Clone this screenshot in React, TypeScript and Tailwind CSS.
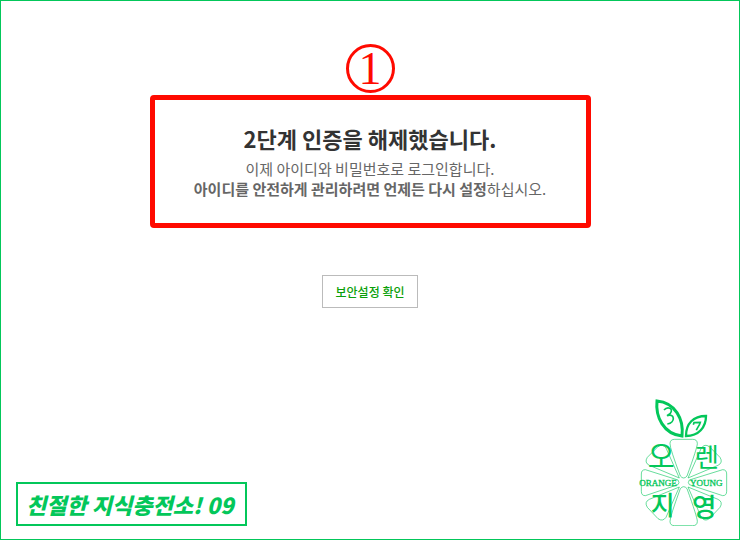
const SITE_GREEN = '#03c75a';

function BrandBanner() {
  return (
    <p className="border-2 border-[#03c75a] pl-2 pr-[11px] h-11 flex items-center text-[22px] leading-10 font-black italic text-[#03c75a] whitespace-nowrap">
      친절한 지식충전소! 09
    </p>
  );
}

function OrangeLogo() {
  return (
    <svg
      viewBox="24 24 270 384"
      className="w-[90px] h-32"
      fill="none"
      stroke={SITE_GREEN}
      role="img"
      aria-label="오렌지영"
    >
      {/* leaves */}
      <path
        d="M81 33 C76 80 100 132 156 138 C162 88 136 38 81 33Z"
        strokeWidth="9"
      />
      <path
        d="M168 138 C168 100 190 78 228 78 C228 112 206 138 168 138Z"
        strokeWidth="7"
      />
      <path d="M102 60 C112 48 132 54 121 70 L111 77 C134 68 138 98 112 102" strokeWidth="5" />
      <path d="M190 104 L192 98 L211 97 C209 106 202 112 199 121" strokeWidth="5" />

      {/* fruit segments */}
      <g strokeWidth="3" strokeOpacity="0.6">
        <path d="M120 161 Q120 148 134 148 H188 Q202 148 202 161 Q202 172 171 258 Q161 270 151 258 Q120 176 120 161Z" />
        <path d="M120 394 Q120 407 134 407 H188 Q202 407 202 394 Q202 382 171 296 Q161 284 151 296 Q120 380 120 394Z" />
        <path d="M46 239 Q34 239 34 252 V304 Q34 317 46 317 L144 284 Q150 278 144 270Z" />
        <path d="M278 239 Q290 239 290 252 V304 Q290 317 278 317 L178 284 Q172 278 178 270Z" />
        <path d="M108 174 Q98 160 84 170 L52 202 Q42 218 58 226 L148 264 Z" />
        <path d="M214 174 Q224 160 238 170 L270 202 Q280 218 264 226 L174 264 Z" />
        <path d="M108 382 Q98 396 84 386 L52 352 Q42 336 58 328 L148 291 Z" />
        <path d="M214 382 Q224 396 238 386 L270 352 Q280 336 264 328 L174 291 Z" />
      </g>

      <g
        fill={SITE_GREEN}
        stroke="none"
        fontWeight="500"
        textAnchor="middle"
        fontFamily="'Noto Sans CJK KR', sans-serif"
      >
        <text x="94" y="231" fontSize="88" fontWeight="400">오</text>
        <text x="230" y="232" fontSize="80" fontWeight="400">렌</text>
        <text x="98" y="376" fontSize="78">지</text>
        <text x="223" y="382" fontSize="80">영</text>
      </g>
      <g
        fill={SITE_GREEN}
        stroke={SITE_GREEN}
        strokeWidth="1"
        fontSize="27"
        fontFamily="'Liberation Serif', serif"
      >
        <text x="28" y="287">ORANGE</text>
        <text x="180" y="287">YOUNG</text>
      </g>
    </svg>
  );
}

export default function App() {
  return (
    <div className="min-h-screen flex flex-col border border-[#03c75a] bg-white font-['Noto_Sans_CJK_KR',sans-serif]">
      <main className="flex flex-col items-center pt-[43px]">
        <span className="size-[49px] flex items-center justify-center rounded-full border-3 border-[#ff0a00] font-['Liberation_Serif',serif] text-[46px] leading-[43px] text-[#ff0a00]">
          1
        </span>

        <section className="w-full max-w-[441px] mt-0.5 border-5 border-[#ff0a00] rounded-sm pt-6 pb-6 text-center">
          <h1 className="text-[22px] leading-7 font-bold text-[#333]">
            2단계 인증을 해제했습니다.
          </h1>
          <p className="mt-[7px] text-[15px] leading-5 text-[#666]">
            이제 아이디와 비밀번호로 로그인합니다.
            <br />
            <strong className="font-bold">
              아이디를 안전하게 관리하려면 언제든 다시 설정
            </strong>
            하십시오.
          </p>
        </section>

        <button
          type="button"
          className="mt-[47px] h-[33px] px-[13px] border border-[#bbb] text-xs font-medium text-[#0a9f0a]"
        >
          보안설정 확인
        </button>
      </main>

      <footer className="mt-auto flex items-end justify-between pl-[15px] pr-[11px] pb-[13px]">
        <BrandBanner />
        <OrangeLogo />
      </footer>
    </div>
  );
}
